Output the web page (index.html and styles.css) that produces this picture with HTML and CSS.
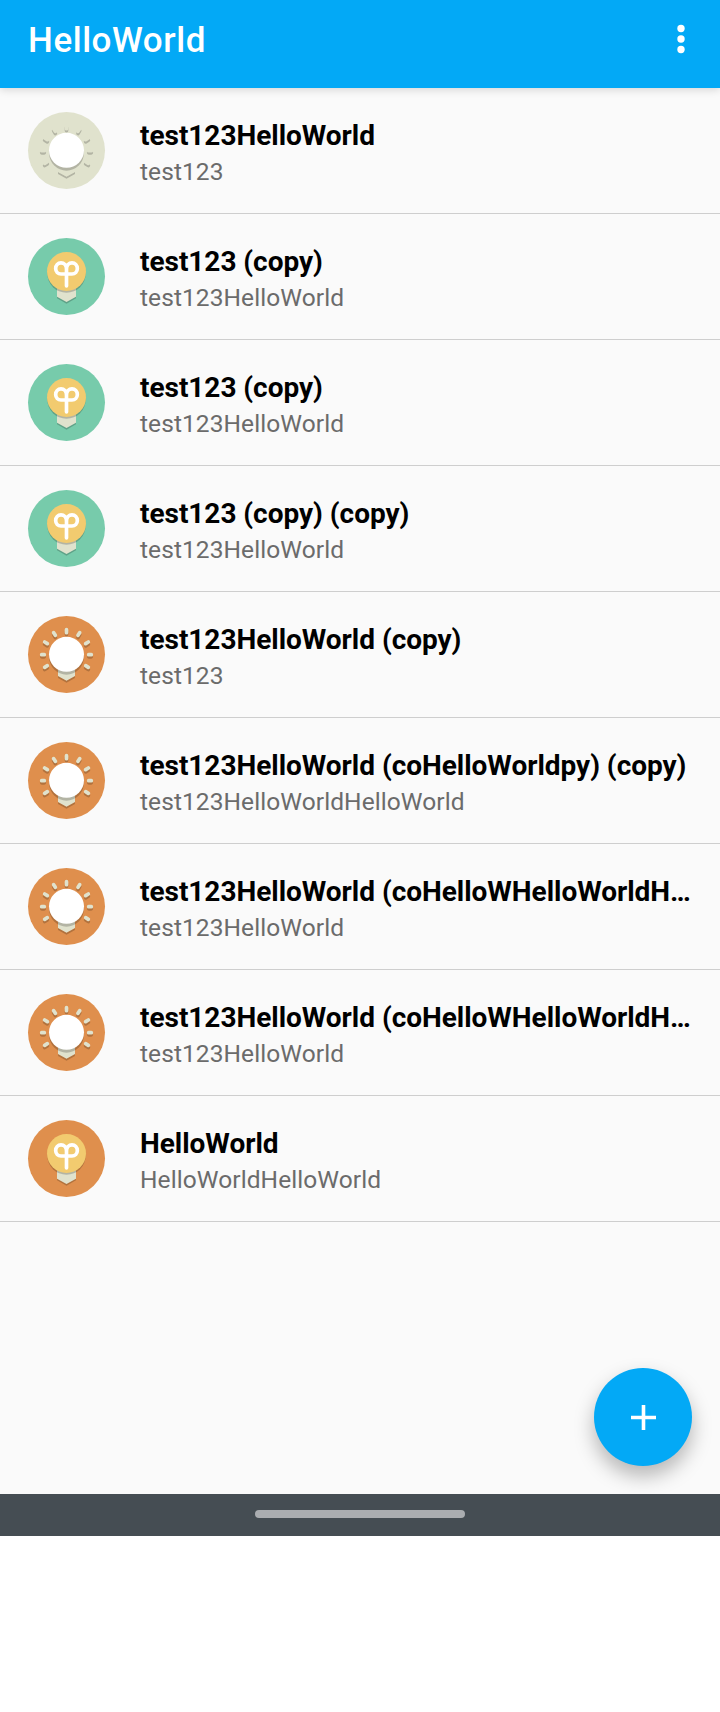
FILE: index.html
```html
<!DOCTYPE html>
<html lang="en">
<head>
<meta charset="utf-8">
<title>HelloWorld</title>
<link rel="stylesheet" href="styles.css">
</head>
<body>
<svg class="sprites" aria-hidden="true">
  <symbol id="plain" viewBox="24 24 231 231">
    <circle class="shade" cx="139.5" cy="148" r="52"/>
    <circle cx="139.5" cy="139" r="52.5" fill="#fff"/>
  </symbol>
  <symbol id="rays" viewBox="24 24 231 231">
    <path d="M139.500 65v9M101 74l5 8M174 82l5-8M74 102l8 5M197 107l8-5M65 140h8M206 140h8M74 178l8-5M197 173l8 5"/>
  </symbol>
  <symbol id="off" viewBox="24 24 231 231">
    <use href="#rays" class="rays-shade" x="24" y="30.500" width="231" height="231"/>
    <use href="#rays" class="rays-pale" x="24" y="24" width="231" height="231"/>
    <path class="shade" d="M114 203l25.500 14 25.500-14v7l-25.500 14-25.500-14z"/>
    <path class="cream" d="M114 170h51v34l-25.500 14-25.500-14z"/>
    <use href="#plain" x="24" y="24" width="231" height="231"/>
  </symbol>
  <symbol id="on" viewBox="24 24 231 231">
    <path class="shade" d="M111 180h57v25l-28.500 16-28.500-16z"/>
    <path class="cream" d="M111 170h57v30l-28.500 16-28.500-16z"/>
    <circle class="shade" cx="139.500" cy="131" r="57.500"/>
    <circle cx="139.500" cy="124.500" r="58.500" fill="#f2cb6f"/>
    <path class="filament" d="M139.500 168V117C139.500 106 132 98.500 123 98.500S107 106 107 115.500 114 132 123 132H156C165 132 172 125 172 115.500S165 98.500 156 98.500 139.500 106 139.500 117"/>
  </symbol>
</svg>
<main class="screen">
  <header class="app-bar">
    <h1 class="app-title">HelloWorld</h1>
    <svg class="more" viewBox="0 0 8 30"><circle cx="4" cy="4.500" r="3.700"/><circle cx="4" cy="15" r="3.700"/><circle cx="4" cy="25.500" r="3.700"/></svg>
  </header>
  <ul class="list">
    <li class="row"><svg class="avatar beige"><use href="#off"/></svg><div class="text"><div class="name">test123HelloWorld</div><div class="detail">test123</div></div></li>
    <li class="row"><svg class="avatar green"><use href="#on"/></svg><div class="text"><div class="name">test123 (copy)</div><div class="detail">test123HelloWorld</div></div></li>
    <li class="row"><svg class="avatar green"><use href="#on"/></svg><div class="text"><div class="name">test123 (copy)</div><div class="detail">test123HelloWorld</div></div></li>
    <li class="row"><svg class="avatar green"><use href="#on"/></svg><div class="text"><div class="name">test123 (copy) (copy)</div><div class="detail">test123HelloWorld</div></div></li>
    <li class="row"><svg class="avatar orange"><use href="#off"/></svg><div class="text"><div class="name">test123HelloWorld (copy)</div><div class="detail">test123</div></div></li>
    <li class="row"><svg class="avatar orange"><use href="#off"/></svg><div class="text"><div class="name">test123HelloWorld (coHelloWorldpy) (copy)</div><div class="detail">test123HelloWorldHelloWorld</div></div></li>
    <li class="row"><svg class="avatar orange"><use href="#off"/></svg><div class="text"><div class="name">test123HelloWorld (coHelloWHelloWorldH…</div><div class="detail">test123HelloWorld</div></div></li>
    <li class="row"><svg class="avatar orange"><use href="#off"/></svg><div class="text"><div class="name">test123HelloWorld (coHelloWHelloWorldH…</div><div class="detail">test123HelloWorld</div></div></li>
    <li class="row"><svg class="avatar orange"><use href="#on"/></svg><div class="text"><div class="name">HelloWorld</div><div class="detail">HelloWorldHelloWorld</div></div></li>
  </ul>
  <button class="fab" aria-label="Add"><svg class="plus" viewBox="0 0 25 25"><path d="M12.500 0v25M0 12.500h25"/></svg></button>
</main>
<nav class="nav-bar"><div class="handle"></div></nav>
</body>
</html>
```
FILE: styles.css
```css
body {
  margin: 0;
  background: #fff;
  font-family: Roboto, sans-serif;
}
.sprites {
  position: absolute;
  width: 0;
  height: 0;
}
.screen {
  position: relative;
  height: 1494px;
  overflow: hidden;
  background: #fafafa;
}
.app-bar {
  box-sizing: border-box;
  display: flex;
  justify-content: space-between;
  height: 88px;
  padding: 20px 35px 0 28px;
  background: #03a9f6;
  box-shadow: 0 2px 8px rgba(0, 0, 0, 0.14);
}
.app-title {
  margin: 0;
  color: #fff;
  font-size: 35px;
  font-weight: 500;
  letter-spacing: 0.55px;
  line-height: 41px;
}
.more {
  width: 8px;
  height: 30px;
  margin-top: 4px;
  fill: #fff;
}
.list {
  margin: 0;
  padding: 0;
  list-style: none;
}
.row {
  box-sizing: border-box;
  display: flex;
  gap: 35px;
  height: 126px;
  padding: 24px 28px 0;
  border-bottom: 1px solid #cecece;
}
.avatar {
  flex: none;
  width: 77px;
  height: 77px;
  border-radius: 50%;
}
.beige { background: #e0e2cd; }
.green { background: #77cbab; }
.orange { background: #df8f4d; }
.cream { fill: #e0e2cd; }
.shade { fill: rgba(0, 0, 0, 0.2); }
.rays-pale,
.rays-shade {
  fill: none;
  stroke-width: 11;
  stroke-linecap: round;
}
.rays-pale { stroke: #e0e2cd; }
.rays-shade { stroke: rgba(0, 0, 0, 0.2); }
.filament {
  fill: none;
  stroke: #fff;
  stroke-width: 11;
  stroke-linecap: round;
  stroke-linejoin: round;
}
.text {
  min-width: 0;
  padding-top: 7px;
}
.name,
.detail {
  white-space: nowrap;
}
.name {
  color: #000;
  font-size: 28px;
  font-weight: 700;
  letter-spacing: -0.03px;
  line-height: 33px;
}
.detail {
  margin-top: 5px;
  color: #6b6b6b;
  font-size: 24.5px;
  letter-spacing: 0.08px;
  line-height: 29px;
}
.fab {
  position: absolute;
  right: 28px;
  bottom: 28px;
  display: flex;
  align-items: center;
  justify-content: center;
  width: 98px;
  height: 98px;
  padding: 0;
  border: 0;
  border-radius: 50%;
  background: #03a9f6;
  box-shadow: 0 10px 20px rgba(0, 0, 0, 0.28);
}
.plus {
  width: 25px;
  height: 25px;
  fill: none;
  stroke: #fff;
  stroke-width: 3.6;
}
.nav-bar {
  display: flex;
  align-items: flex-start;
  justify-content: center;
  height: 42px;
  background: #454d53;
}
.handle {
  width: 210px;
  height: 8px;
  margin-top: 16px;
  border-radius: 4px;
  background: #aaadb0;
}
```
